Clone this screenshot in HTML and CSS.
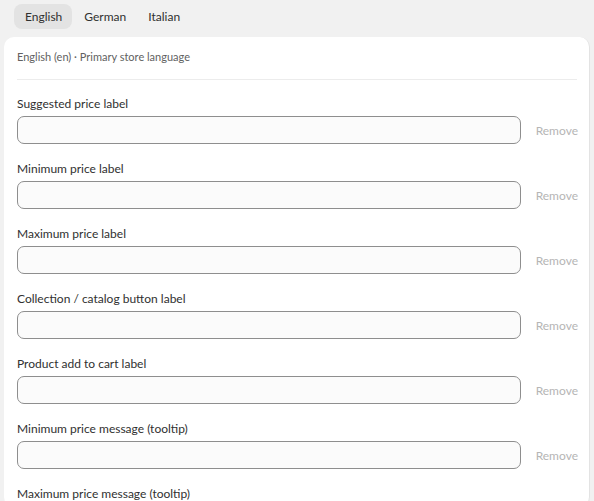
FILE: index.html
```html
<!DOCTYPE html>
<html>
<head>
    <meta name="viewport" content="width=device-width, initial-scale=1.0">
    <link rel="stylesheet" href="styles.css">
</head>

<body>
    <div class="page">
        <div class="tabs">
            <button class="tab active">English</button>
            <button class="tab">German</button>
            <button class="tab">Italian</button>
        </div>

        <div class="card">
            <p class="lang-info">English (en) · Primary store language</p>

            <div class="field">
                <label class="field-label">Suggested price label</label>
                <div class="field-row">
                    <input class="field-input" type="text">
                    <span class="remove">Remove</span>
                </div>
            </div>

            <div class="field">
                <label class="field-label">Minimum price label</label>
                <div class="field-row">
                    <input class="field-input" type="text">
                    <span class="remove">Remove</span>
                </div>
            </div>

            <div class="field">
                <label class="field-label">Maximum price label</label>
                <div class="field-row">
                    <input class="field-input" type="text">
                    <span class="remove">Remove</span>
                </div>
            </div>

            <div class="field">
                <label class="field-label">Collection / catalog button label</label>
                <div class="field-row">
                    <input class="field-input" type="text">
                    <span class="remove">Remove</span>
                </div>
            </div>

            <div class="field">
                <label class="field-label">Product add to cart label</label>
                <div class="field-row">
                    <input class="field-input" type="text">
                    <span class="remove">Remove</span>
                </div>
            </div>

            <div class="field">
                <label class="field-label">Minimum price message (tooltip)</label>
                <div class="field-row">
                    <input class="field-input" type="text">
                    <span class="remove">Remove</span>
                </div>
            </div>

            <div class="field">
                <label class="field-label">Maximum price message (tooltip)</label>
            </div>
        </div>
    </div>
</body>
</html>
```

FILE: styles.css
```css
* {
    margin: 0;
    padding: 0;
    box-sizing: border-box;
    font-family: 'Segoe UI', Lato, 'Open Sans', sans-serif;
}

:root {
    --page-bg: #f1f1f1;
    --card-bg: #fff;
    --border-color: #e3e3e3;
    --text-primary: #303030;
    --text-secondary: #616161;
    --text-muted: #b5b5b5;
    --input-border: #8e8e8e;
}

body {
    background: var(--page-bg);
    color: var(--text-primary);
    overflow: hidden;
}

.page {
    padding: 4px 4px 0;
}

.tabs {
    display: flex;
    gap: 2px;
    padding-left: 10px;
    margin-bottom: 8px;
}

.tab {
    border: none;
    background: none;
    color: var(--text-primary);
    font-size: 12px;
    height: 25px;
    padding: 0 10px;
    border-radius: 8px;
}

.tab.active {
    background: #e3e3e3;
    padding: 0 10px 0 11px;
}

.card {
    background: var(--card-bg);
    border-radius: 10px;
    border-right: 1px solid var(--border-color);
    padding: 0 11px 0 13px;
    min-height: 470px;
}

.lang-info {
    font-size: 11px;
    line-height: 14px;
    color: var(--text-secondary);
    padding: 13px 0 15px;
    border-bottom: 1px solid #ececec;
    margin-right: 1px;
    margin-bottom: 15px;
}

.field {
    margin-bottom: 16px;
}

.field-label {
    display: block;
    font-size: 12px;
    line-height: 18px;
    margin-bottom: 3px;
}

.field-row {
    display: flex;
    align-items: center;
}

.field-input {
    flex: 1;
    height: 28px;
    border: 1px solid var(--input-border);
    border-radius: 7px;
    background: #fbfbfb;
    outline: none;
}

.remove {
    margin-left: 15px;
    font-size: 12px;
    color: var(--text-muted);
}
```
